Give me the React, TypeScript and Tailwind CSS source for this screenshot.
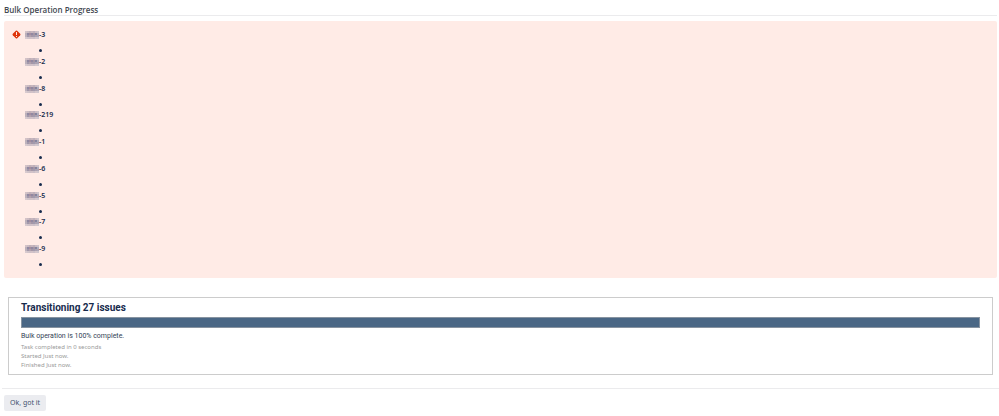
import { useState } from "react"

const failedIssues = ["3", "2", "8", "219", "1", "6", "5", "7", "9"]

const maskRows = [
  ["#d3c3c8", "#cbbbc2", "#c0b1ba", "#c8b6bd", "#beb0bb", "#cdbdc3", "#cfc5cc"],
  ["#bcb0ba", "#9088a2", "#a58d9e", "#9188a1", "#a594a2", "#8585a0", "#b2adbc"],
  ["#bdb2bc", "#a297aa", "#b0a1ad", "#a596a6", "#a19aad", "#aca1af", "#aaa6b8"],
  ["#d8cacf", "#d1c4ca", "#cfc1c8", "#d2c2c8", "#ccc0c8", "#d5c7cd", "#cfc7ce"],
]

function ErrorIcon() {
  return (
    <svg className="mt-px h-[9px] w-[9px] shrink-0" viewBox="0 0 18 18" role="img" aria-label="Error">
      <path
        fill="#de350b"
        d="M7.6 1.6a2 2 0 0 1 2.8 0l6 6a2 2 0 0 1 0 2.8l-6 6a2 2 0 0 1-2.8 0l-6-6a2 2 0 0 1 0-2.8z"
      />
      <path fill="#ffebe6" d="M8 4h2v6H8zM8 12h2v2H8z" />
    </svg>
  )
}

function ProjectKeyMask() {
  return (
    <svg className="h-2 w-3.5 shrink-0" viewBox="0 0 14 8" shapeRendering="crispEdges" aria-hidden="true">
      {maskRows.map((row, y) =>
        row.map((fill, x) => <rect key={`${x}-${y}`} x={x * 2} y={y * 2} width="2" height="2" fill={fill} />),
      )}
    </svg>
  )
}

export default function App() {
  const [progress] = useState(100)

  return (
    <main className="bg-white pt-[5px] font-['Noto_Sans','Open_Sans',sans-serif] text-[#172b4d]">
      <header className="mr-0.5 ml-1 border-b border-[#ebebed] font-['Open_Sans','Noto_Sans',sans-serif] text-[8px] leading-[10px]">
        <h1 className="font-semibold text-[#42474f]">Bulk Operation Progress</h1>
      </header>

      <section className="mt-[5px] mr-0.5 ml-1 flex gap-1 rounded-xs bg-[#ffebe6] p-2">
        <ErrorIcon />
        <ul className="grid h-[241px] flex-1 auto-rows-fr">
          {failedIssues.map((issue) => (
            <li key={issue}>
              <div className="flex h-3 items-center text-[7px] leading-3 font-semibold">
                <ProjectKeyMask />
                <span>-{issue}</span>
              </div>
              <div className="mt-2 ml-3.5 h-[3px] w-[3px] rounded-full bg-[#172b4d]" />
            </li>
          ))}
        </ul>
      </section>

      <section className="mt-[19px] mr-1.5 ml-2 border border-[#ccc] px-3 py-1">
        <h2 className="font-[Roboto,sans-serif] text-[10px] leading-3 font-bold">
          Transitioning {failedIssues.length * 3} issues
        </h2>
        <div
          className="mt-[3px] h-[11px] border border-[#8793a0]"
          role="progressbar"
          aria-label="Bulk operation"
          aria-valuenow={progress}
        >
          <div className="h-full bg-[#4a6785]" style={{ width: `${progress}%` }} />
        </div>
        <p className="mt-0.5 font-[Roboto,sans-serif] text-[7px] leading-3 text-[#333f55]">
          Bulk operation is {progress}% complete.
        </p>
        <div className="mt-px text-[6px] leading-[9px] text-[#999]">
          <p>Task completed in 0 seconds</p>
          <p>Started Just now.</p>
          <p>Finished Just now.</p>
        </div>
      </section>

      <footer className="mt-[13px] ml-0.5 flex border-t border-[#ebebed] px-0.5 pt-1.5">
        <button type="button" className="rounded-xs bg-[#ebecf0] px-1.5 text-[7px] leading-4 text-[#42526e]">
          Ok, got it
        </button>
      </footer>
    </main>
  )
}
